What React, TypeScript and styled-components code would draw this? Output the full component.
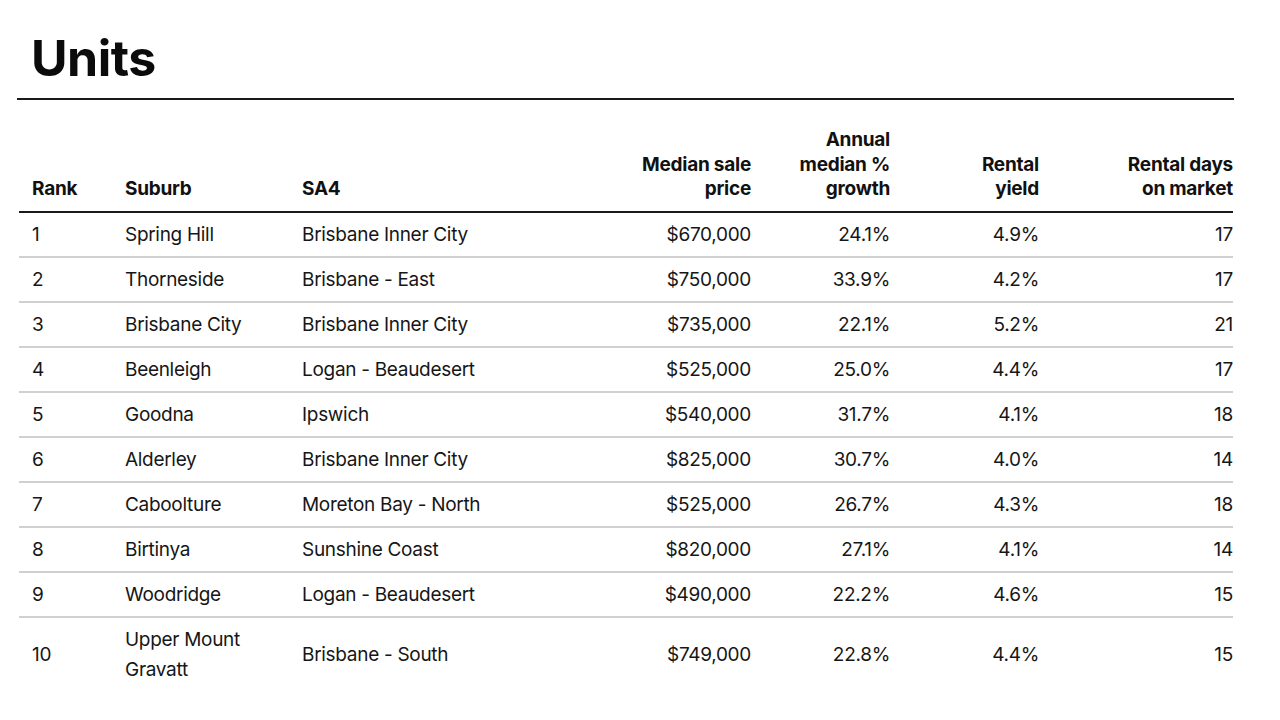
import React from 'react';
import styled, { createGlobalStyle } from 'styled-components';

const GlobalStyle = createGlobalStyle`
  html, body {
    margin: 0;
    padding: 0;
    background: #ffffff;
  }
  body {
    font-family: Inter, "Liberation Sans", Arial, sans-serif;
    color: #111111;
  }
`;

type Row = {
  rank: number;
  suburb: string;
  sa4: string;
  price: string;
  growth: string;
  yieldPct: string;
  days: number;
};

const rows: Row[] = [
  { rank: 1, suburb: 'Spring Hill', sa4: 'Brisbane Inner City', price: '$670,000', growth: '24.1%', yieldPct: '4.9%', days: 17 },
  { rank: 2, suburb: 'Thorneside', sa4: 'Brisbane - East', price: '$750,000', growth: '33.9%', yieldPct: '4.2%', days: 17 },
  { rank: 3, suburb: 'Brisbane City', sa4: 'Brisbane Inner City', price: '$735,000', growth: '22.1%', yieldPct: '5.2%', days: 21 },
  { rank: 4, suburb: 'Beenleigh', sa4: 'Logan - Beaudesert', price: '$525,000', growth: '25.0%', yieldPct: '4.4%', days: 17 },
  { rank: 5, suburb: 'Goodna', sa4: 'Ipswich', price: '$540,000', growth: '31.7%', yieldPct: '4.1%', days: 18 },
  { rank: 6, suburb: 'Alderley', sa4: 'Brisbane Inner City', price: '$825,000', growth: '30.7%', yieldPct: '4.0%', days: 14 },
  { rank: 7, suburb: 'Caboolture', sa4: 'Moreton Bay - North', price: '$525,000', growth: '26.7%', yieldPct: '4.3%', days: 18 },
  { rank: 8, suburb: 'Birtinya', sa4: 'Sunshine Coast', price: '$820,000', growth: '27.1%', yieldPct: '4.1%', days: 14 },
  { rank: 9, suburb: 'Woodridge', sa4: 'Logan - Beaudesert', price: '$490,000', growth: '22.2%', yieldPct: '4.6%', days: 15 },
  { rank: 10, suburb: 'Upper Mount Gravatt', sa4: 'Brisbane - South', price: '$749,000', growth: '22.8%', yieldPct: '4.4%', days: 15 },
];

// column widths in px, table spans 19 → 1233
const columns: { label: React.ReactNode; width: number; right?: boolean }[] = [
  { label: 'Rank', width: 93 },
  { label: 'Suburb', width: 177 },
  { label: 'SA4', width: 331 },
  { label: <>Median sale<br />price</>, width: 131, right: true },
  { label: <>Annual<br />median %<br />growth</>, width: 139, right: true },
  { label: <>Rental<br />yield</>, width: 149, right: true },
  { label: <>Rental days<br />on market</>, width: 194, right: true },
];

const Page = styled.div`
  width: 1280px;
  height: 720px;
  overflow: hidden;
  padding: 28px 46px 0 17px;
  box-sizing: border-box;
`;

const Title = styled.h1`
  margin: 0;
  padding: 0 0 10px 14px;
  font-size: 50px;
  line-height: 60px;
  font-weight: 700;
  letter-spacing: -0.5px;
  color: #0b0b0b;
  border-bottom: 2px solid #1a1a1a;
`;

const Table = styled.table`
  margin: 28px 0 0 2px;
  width: 1214px;
  border-collapse: collapse;
  table-layout: fixed;
`;

const HeadCell = styled.th<{ $right?: boolean }>`
  text-align: ${({ $right }) => ($right ? 'right' : 'left')};
  vertical-align: bottom;
  font-size: 19px;
  line-height: 24.5px;
  font-weight: 700;
  letter-spacing: -0.25px;
  color: #111;
  padding: 0 0 9px 13px;
  border-bottom: 2px solid #1a1a1a;
`;

const BodyRow = styled.tr<{ $last?: boolean }>`
  border-bottom: ${({ $last }) => ($last ? 'none' : '2px solid #d0d0d0')};
`;

const Cell = styled.td<{ $right?: boolean }>`
  text-align: ${({ $right }) => ($right ? 'right' : 'left')};
  vertical-align: middle;
  font-size: 19px;
  line-height: 30px;
  font-weight: 400;
  letter-spacing: -0.3px;
  color: #161616;
  padding: 7.5px 0 5.5px 13px;
`;

export default function App() {
  return (
    <>
      <GlobalStyle />
      <Page>
        <Title>Units</Title>
        <Table>
          <colgroup>
            {columns.map((c, i) => (
              <col key={i} style={{ width: c.width }} />
            ))}
          </colgroup>
          <thead>
            <tr>
              {columns.map((c, i) => (
                <HeadCell key={i} $right={c.right}>
                  {c.label}
                </HeadCell>
              ))}
            </tr>
          </thead>
          <tbody>
            {rows.map((r, i) => (
              <BodyRow key={r.rank} $last={i === rows.length - 1}>
                <Cell>{r.rank}</Cell>
                <Cell>{r.suburb}</Cell>
                <Cell>{r.sa4}</Cell>
                <Cell $right>{r.price}</Cell>
                <Cell $right>{r.growth}</Cell>
                <Cell $right>{r.yieldPct}</Cell>
                <Cell $right>{r.days}</Cell>
              </BodyRow>
            ))}
          </tbody>
        </Table>
      </Page>
    </>
  );
}
